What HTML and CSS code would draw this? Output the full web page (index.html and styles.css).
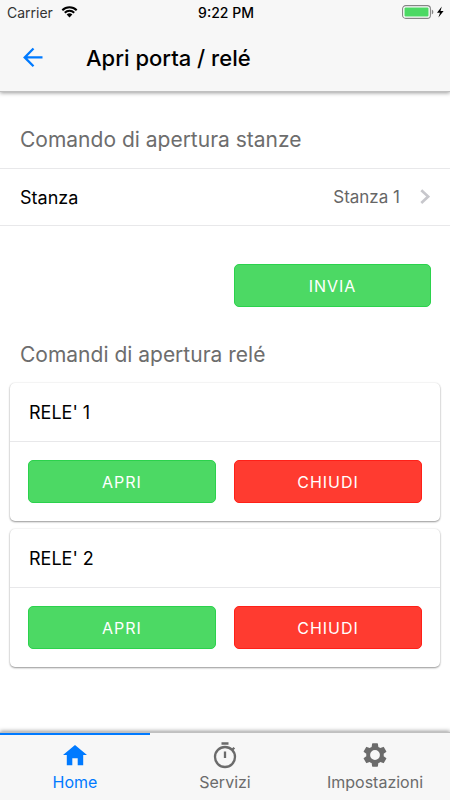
FILE: index.html
```html
<!DOCTYPE html>
<html lang="it">
<head>
<meta charset="utf-8">
<meta name="viewport" content="width=device-width, initial-scale=1">
<title>Apri porta / relé</title>
<link rel="stylesheet" href="styles.css">
</head>
<body>
<div class="app">
  <header class="header">
    <div class="status">
      <span class="carrier">Carrier
        <svg class="wifi" viewBox="0 0 18 13" aria-hidden="true"><path d="M1.2 4.6a11.2 11.2 0 0 1 15.6 0M3.9 7.3a7.3 7.3 0 0 1 10.2 0" fill="none" stroke="#000" stroke-width="2.2"/><path d="M9 12.4 5.9 9.3a4.4 4.4 0 0 1 6.2 0z"/></svg>
      </span>
      <span class="time">9:22 PM</span>
      <svg class="battery" viewBox="0 0 43 14" aria-hidden="true"><rect x=".6" y=".6" width="27.8" height="12.8" rx="3.2" fill="#fff" stroke="#858585" stroke-width="1.1"/><rect x="2.5" y="2.5" width="24" height="9" rx="1" fill="#4cd964"/><path d="M29.8 4.6q1.6.8 1.6 2.4t-1.6 2.4z" fill="#858585"/><path d="M39.8 1.5 35 7.7h3l-1.6 4.8 5.2-6.4h-3.1z"/></svg>
    </div>
    <div class="toolbar">
      <button class="back" aria-label="Indietro"><svg viewBox="0 0 22 22" aria-hidden="true"><path d="M20.5 10.4H3.2M11.5 1.5 2.7 10.4l8.8 8.9" fill="none" stroke="#007aff" stroke-width="2.3"/></svg></button>
      <h1>Apri porta / relé</h1>
    </div>
  </header>
  <main class="content">
    <h2>Comando di apertura stanze</h2>
    <div class="row">
      <label for="room">Stanza</label>
      <select id="room"><option>Stanza 1</option></select>
      <svg class="chevron" viewBox="0 0 10 16" aria-hidden="true"><path d="m1.3 1.2 6.9 6.4-6.9 6.4" fill="none" stroke="#c7c7cc" stroke-width="2.7"/></svg>
    </div>
    <div class="actions send">
      <button class="btn green">INVIA</button>
    </div>
    <h2>Comandi di apertura relé</h2>
    <section class="card">
      <h3>RELE' 1</h3>
      <div class="actions">
        <button class="btn green">APRI</button>
        <button class="btn red">CHIUDI</button>
      </div>
    </section>
    <section class="card">
      <h3>RELE' 2</h3>
      <div class="actions">
        <button class="btn green">APRI</button>
        <button class="btn red">CHIUDI</button>
      </div>
    </section>
  </main>
  <nav class="tabs">
    <a class="tab active" href="#home"><svg viewBox="0 0 28 28" aria-hidden="true"><path d="M11.3 24.2v-7h5.4v7h5.5V14H26L14 4 2 14h3.8v10.2z" fill="currentColor"/></svg>Home</a>
    <a class="tab" href="#servizi"><svg viewBox="0 0 28 28" aria-hidden="true"><g fill="none" stroke="currentColor" stroke-width="2.3"><circle cx="14" cy="16" r="10"/><path d="M10.5 2.5h7M14 10.5V17M21.3 8.7l2-2"/></g></svg>Servizi</a>
    <a class="tab" href="#impostazioni"><svg viewBox="0 0 24 24" aria-hidden="true"><path d="M19.43 12.98c.04-.32.07-.64.07-.98s-.03-.66-.07-.98l2.11-1.65a.5.5 0 0 0 .12-.64l-2-3.46a.5.5 0 0 0-.61-.22l-2.49 1a7.3 7.3 0 0 0-1.69-.98l-.38-2.65A.49.49 0 0 0 14 2h-4a.49.49 0 0 0-.49.42l-.38 2.65c-.61.25-1.17.59-1.69.98l-2.49-1a.5.5 0 0 0-.61.22l-2 3.46a.5.5 0 0 0 .12.64l2.11 1.65c-.04.32-.07.65-.07.98s.03.66.07.98l-2.11 1.65a.5.5 0 0 0-.12.64l2 3.46c.12.22.39.3.61.22l2.49-1c.52.4 1.08.73 1.69.98l.38 2.65c.03.24.24.42.49.42h4c.25 0 .46-.18.49-.42l.38-2.65c.61-.25 1.17-.59 1.69-.98l2.49 1c.23.09.49 0 .61-.22l2-3.46a.5.5 0 0 0-.12-.64zM12 16.2a4.2 4.2 0 1 1 0-8.4 4.2 4.2 0 0 1 0 8.4z" fill="currentColor"/></svg>Impostazioni</a>
  </nav>
</div>
</body>
</html>
```
FILE: styles.css
```css
* { box-sizing: border-box; }
body {
  margin: 0;
  background: #fff;
  color: #000;
  font-family: Inter, "Liberation Sans", sans-serif;
}
h1, h2, h3 { margin: 0; }
button, select { font-family: inherit; }
svg { display: block; }

.app {
  min-height: 100vh;
  display: flex;
  flex-direction: column;
}

.header {
  background: #f7f7f7;
  border-bottom: 1px solid #c0c0c0;
  box-shadow: 0 1px 4px rgba(0, 0, 0, .4);
}
.status {
  display: grid;
  grid-template-columns: 1fr auto 1fr;
  align-items: center;
  height: 24px;
  padding: 0 5px 0 7px;
  font-size: 14px;
}
.carrier { display: flex; align-items: center; gap: 8px; color: #333; }
.wifi { width: 17px; height: 12px; }
.time { font-weight: 500; }
.battery { width: 43px; height: 14px; justify-self: end; }
.toolbar {
  display: flex;
  align-items: center;
  gap: 42px;
  height: 67px;
  padding: 0 22px;
}
.back {
  padding: 0;
  border: 0;
  background: none;
}
.back svg { width: 22px; height: 22px; }
h1 { font-size: 22px; font-weight: 500; line-height: 28px; }

.content { flex: 1; }
h2 {
  padding: 0 20px;
  margin: 36px 0 16px;
  color: #6d6d6d;
  font-size: 21px;
  font-weight: 400;
  line-height: 24px;
}
.row {
  display: flex;
  align-items: center;
  height: 58px;
  padding: 0 20px;
  border: solid #e8e8ea;
  border-width: 1px 0;
  font-size: 18px;
}
.row select {
  flex: 1;
  margin-right: 20px;
  appearance: none;
  border: 0;
  padding: 0;
  background: none;
  color: #666;
  font-size: 17px;
  text-align-last: right;
}
.chevron { width: 10px; height: 16px; }

.actions {
  display: grid;
  grid-template-columns: 1fr 1fr;
  gap: 18px;
  padding: 18px;
}
.send { padding: 38px 19px 0; }
.send .btn { grid-column: 2; }
.btn {
  height: 43px;
  padding: 0;
  border: 1px solid;
  border-radius: 5px;
  color: #fff;
  font-size: 16px;
  letter-spacing: 1px;
}
.green { background: #4cd964; border-color: #2bd24c; }
.red { background: #ff3b30; border-color: #ff2018; }

.card {
  margin: 0 10px 8px;
  border-radius: 5px;
  background: #fff;
  box-shadow: 0 1px 2px rgba(0, 0, 0, .4), 0 0 2px rgba(0, 0, 0, .1);
}
.card h3 {
  padding: 19px 19px 17px;
  border-bottom: 1px solid #e8e8ea;
  font-size: 18px;
  font-weight: 400;
  line-height: 22px;
}

.tabs {
  display: grid;
  grid-template-columns: repeat(3, 1fr);
  background: #f7f7f7;
  border-top: 1px solid #c0c0c0;
  box-shadow: 0 -1px 4px rgba(0, 0, 0, .4);
}
.tab {
  display: flex;
  flex-direction: column;
  align-items: center;
  gap: 3px;
  padding: 6px 0 8px;
  border-top: 2px solid transparent;
  color: #6b6b6b;
  font-size: 16px;
  line-height: 20px;
  text-decoration: none;
}
.tab.active { border-color: #007aff; color: #007aff; }
.tab svg { width: 28px; height: 28px; }
```
